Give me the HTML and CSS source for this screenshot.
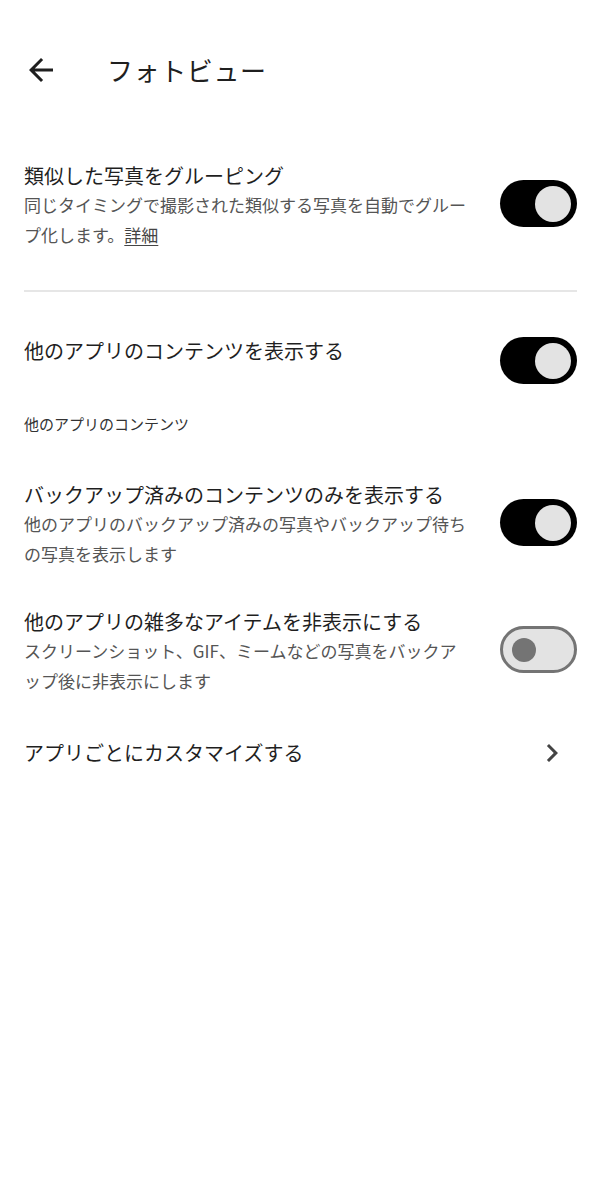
FILE: index.html
```html
<!DOCTYPE html>
<html lang="ja">
<head>
<meta charset="utf-8">
<title>フォトビュー</title>
<link rel="stylesheet" href="styles.css">
</head>
<body>
<header class="appbar">
  <svg class="back" viewBox="0 0 24 24" width="36" height="36" aria-hidden="true"><path d="M20 11H7.83l5.59-5.59L12 4l-8 8 8 8 1.41-1.41L7.83 13H20v-2z" fill="#1f1f1f"/></svg>
  <h1 class="title">フォトビュー</h1>
</header>
<main class="content">
  <div class="row row-first">
    <div class="text">
      <div class="item-title">類似した写真をグルーピング</div>
      <div class="item-sub">同じタイミングで撮影された類似する写真を自動でグループ化します。<span class="link">詳細</span></div>
    </div>
    <div class="toggle on"><span class="knob"></span></div>
  </div>
  <div class="divider"></div>
  <div class="row row-single">
    <div class="text">
      <div class="item-title">他のアプリのコンテンツを表示する</div>
    </div>
    <div class="toggle on"><span class="knob"></span></div>
  </div>
  <div class="section-label">他のアプリのコンテンツ</div>
  <div class="row row-backup">
    <div class="text">
      <div class="item-title">バックアップ済みのコンテンツのみを表示する</div>
      <div class="item-sub">他のアプリのバックアップ済みの写真やバックアップ待ちの写真を表示します</div>
    </div>
    <div class="toggle on"><span class="knob"></span></div>
  </div>
  <div class="row row-hide">
    <div class="text">
      <div class="item-title">他のアプリの雑多なアイテムを非表示にする</div>
      <div class="item-sub">スクリーンショット、GIF、ミームなどの写真をバックアップ後に非表示にします</div>
    </div>
    <div class="toggle off"><span class="knob"></span></div>
  </div>
  <div class="row row-nav">
    <div class="item-title">アプリごとにカスタマイズする</div>
    <svg class="chevron" viewBox="0 0 24 24" width="36" height="36" aria-hidden="true"><path d="M10 6L8.59 7.41 13.17 12l-4.58 4.59L10 18l6-6z" fill="#444"/></svg>
  </div>
</main>
</body>
</html>
```
FILE: styles.css
```css
html, body {
  margin: 0;
  padding: 0;
  background: #ffffff;
}
body {
  font-family: "Noto Sans CJK JP", "Noto Sans", sans-serif;
  color: #1f1f1f;
}
.appbar {
  height: 140px;
  display: flex;
  align-items: center;
  padding-left: 23px;
}
.back {
  display: block;
  flex: none;
}
.title {
  margin: 0 0 0 48px;
  font-size: 26px;
  font-weight: 400;
  line-height: 36px;
  letter-spacing: 0.6px;
  color: #1f1f1f;
}
.content {
  padding: 0 23px 0 24px;
  display: flex;
  flex-direction: column;
}
.row {
  display: flex;
  align-items: center;
  justify-content: space-between;
}
.row-first { margin-top: 22px; }
.row-single { margin-top: 45px; align-items: flex-start; }
.row-backup { margin-top: 47px; }
.row-hide { margin-top: 39px; }
.row-nav { margin-top: 39px; }
.text {
  width: 444px;
  line-break: loose;
}
.item-title {
  font-size: 20px;
  line-height: 28px;
  color: #1f1f1f;
}
.item-sub {
  font-size: 17px;
  line-height: 30px;
  color: #555555;
}
.link {
  text-decoration: underline;
  text-underline-offset: 3px;
  color: #444444;
}
.divider {
  margin-top: 40px;
  height: 2px;
  background: #e6e6e6;
}
.section-label {
  margin-top: 30px;
  font-size: 15px;
  line-height: 20px;
  color: #333333;
}
.toggle {
  flex: none;
  width: 77px;
  height: 47px;
  box-sizing: border-box;
  border-radius: 24px;
  display: flex;
  align-items: center;
  margin-bottom: 5px;
}
.row-single .toggle { margin-bottom: 0; }
.toggle.on {
  background: #000000;
  justify-content: flex-end;
  padding-right: 6px;
}
.toggle.on .knob {
  width: 36px;
  height: 36px;
  border-radius: 50%;
  background: #e3e3e3;
}
.toggle.off {
  background: #e3e3e3;
  border: 3px solid #747474;
  justify-content: flex-start;
  padding-left: 9px;
}
.toggle.off .knob {
  width: 24px;
  height: 24px;
  border-radius: 50%;
  background: #747474;
}
.chevron {
  display: block;
  flex: none;
  margin-right: 7px;
}
```
